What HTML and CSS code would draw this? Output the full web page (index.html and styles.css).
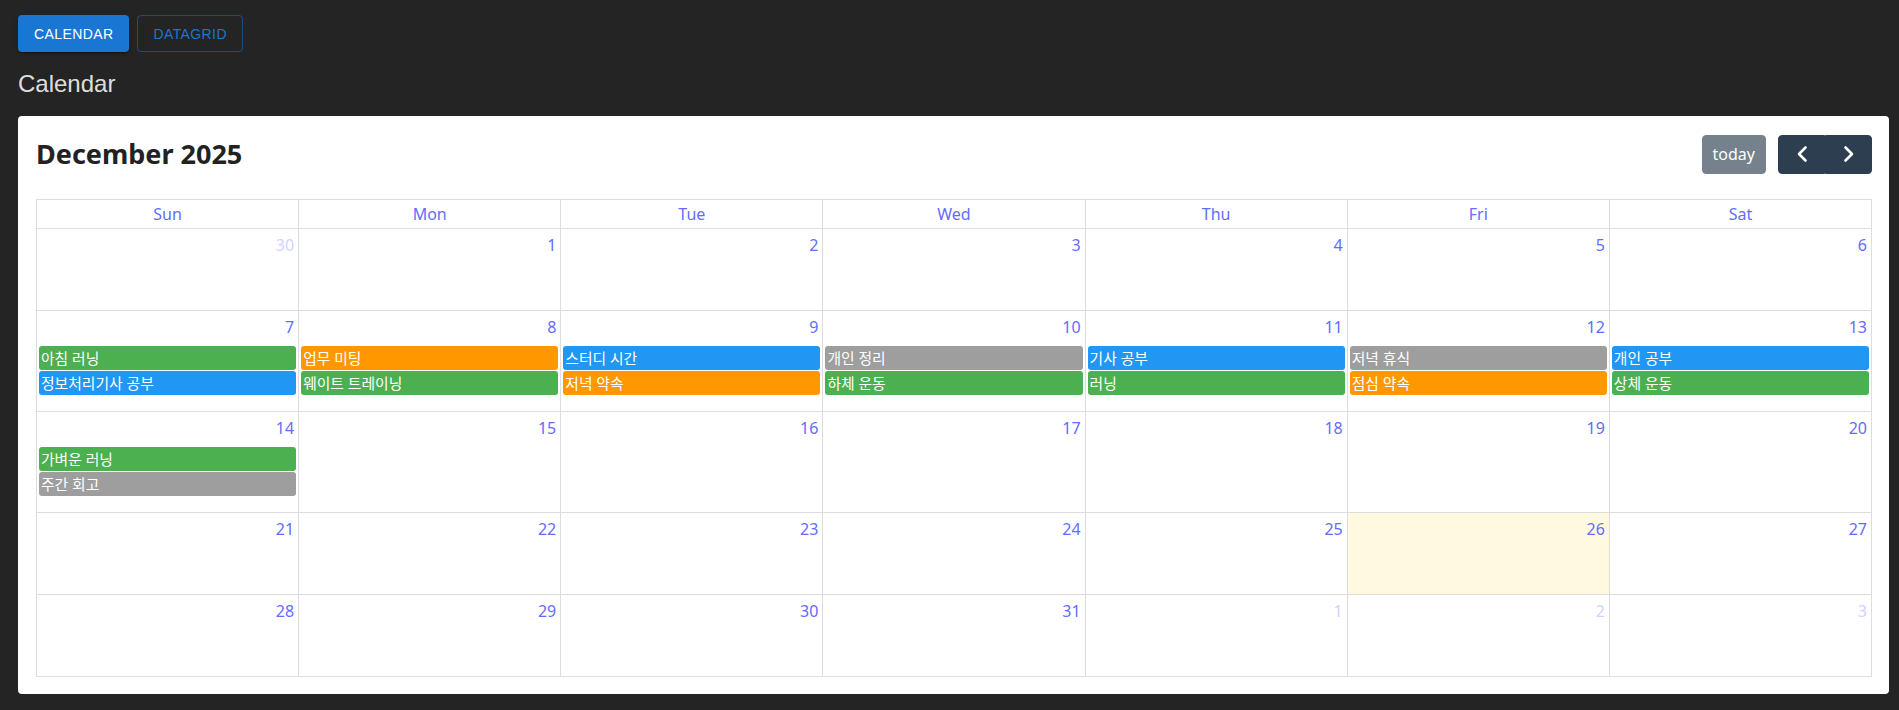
FILE: index.html
```html
<!DOCTYPE html>
<html lang="ko">
<head>
  <meta charset="UTF-8">
  <meta name="viewport" content="width=device-width, initial-scale=1.0">
  <title>Calendar</title>
  <link rel="stylesheet" href="styles.css">
</head>
<body>
  <div class="page">
    <div class="tabs">
      <button class="tab tab-active">Calendar</button>
      <button class="tab">Datagrid</button>
    </div>
    <h2 class="page-title">Calendar</h2>

    <div class="card">
      <div class="toolbar">
        <h2 class="cal-title">December 2025</h2>
        <div class="toolbar-right">
          <button class="fc-btn fc-btn-disabled">today</button>
          <div class="btn-group">
            <button class="fc-btn fc-icon-btn" aria-label="prev">
              <svg width="24" height="24" viewBox="0 0 24 24"><polyline points="15.5,5.5 9,12 15.5,18.5" fill="none" stroke="#fff" stroke-width="2.6" stroke-linecap="round" stroke-linejoin="round"/></svg>
            </button>
            <button class="fc-btn fc-icon-btn" aria-label="next">
              <svg width="24" height="24" viewBox="0 0 24 24"><polyline points="8.5,5.5 15,12 8.5,18.5" fill="none" stroke="#fff" stroke-width="2.6" stroke-linecap="round" stroke-linejoin="round"/></svg>
            </button>
          </div>
        </div>
      </div>

      <div class="month">
        <div class="dow">Sun</div>
        <div class="dow">Mon</div>
        <div class="dow">Tue</div>
        <div class="dow">Wed</div>
        <div class="dow">Thu</div>
        <div class="dow">Fri</div>
        <div class="dow">Sat</div>

        <!-- week 1 -->
        <div class="day other"><span class="num">30</span></div>
        <div class="day"><span class="num">1</span></div>
        <div class="day"><span class="num">2</span></div>
        <div class="day"><span class="num">3</span></div>
        <div class="day"><span class="num">4</span></div>
        <div class="day"><span class="num">5</span></div>
        <div class="day"><span class="num">6</span></div>

        <!-- week 2 -->
        <div class="day"><span class="num">7</span>
          <div class="events">
            <div class="event green">아침 러닝</div>
            <div class="event blue">정보처리기사 공부</div>
          </div>
        </div>
        <div class="day"><span class="num">8</span>
          <div class="events">
            <div class="event orange">업무 미팅</div>
            <div class="event green">웨이트 트레이닝</div>
          </div>
        </div>
        <div class="day"><span class="num">9</span>
          <div class="events">
            <div class="event blue">스터디 시간</div>
            <div class="event orange">저녁 약속</div>
          </div>
        </div>
        <div class="day"><span class="num">10</span>
          <div class="events">
            <div class="event gray">개인 정리</div>
            <div class="event green">하체 운동</div>
          </div>
        </div>
        <div class="day"><span class="num">11</span>
          <div class="events">
            <div class="event blue">기사 공부</div>
            <div class="event green">러닝</div>
          </div>
        </div>
        <div class="day"><span class="num">12</span>
          <div class="events">
            <div class="event gray">저녁 휴식</div>
            <div class="event orange">점심 약속</div>
          </div>
        </div>
        <div class="day"><span class="num">13</span>
          <div class="events">
            <div class="event blue">개인 공부</div>
            <div class="event green">상체 운동</div>
          </div>
        </div>

        <!-- week 3 -->
        <div class="day"><span class="num">14</span>
          <div class="events">
            <div class="event green">가벼운 러닝</div>
            <div class="event gray">주간 회고</div>
          </div>
        </div>
        <div class="day"><span class="num">15</span></div>
        <div class="day"><span class="num">16</span></div>
        <div class="day"><span class="num">17</span></div>
        <div class="day"><span class="num">18</span></div>
        <div class="day"><span class="num">19</span></div>
        <div class="day"><span class="num">20</span></div>

        <!-- week 4 -->
        <div class="day"><span class="num">21</span></div>
        <div class="day"><span class="num">22</span></div>
        <div class="day"><span class="num">23</span></div>
        <div class="day"><span class="num">24</span></div>
        <div class="day"><span class="num">25</span></div>
        <div class="day today"><span class="num">26</span></div>
        <div class="day"><span class="num">27</span></div>

        <!-- week 5 -->
        <div class="day"><span class="num">28</span></div>
        <div class="day"><span class="num">29</span></div>
        <div class="day"><span class="num">30</span></div>
        <div class="day"><span class="num">31</span></div>
        <div class="day other"><span class="num">1</span></div>
        <div class="day other"><span class="num">2</span></div>
        <div class="day other"><span class="num">3</span></div>
      </div>
    </div>
  </div>
</body>
</html>
```

FILE: styles.css
```css
* {
  box-sizing: border-box;
}

body {
  margin: 0;
  background-color: #242424;
  color: rgba(255, 255, 255, 0.87);
  font-family: "Noto Sans", "Noto Sans CJK KR", sans-serif;
  line-height: 1.5;
}

.page {
  padding: 15px 10px 16px 18px;
}

/* top tabs */
.tabs {
  display: flex;
  gap: 8px;
}

.tab {
  height: 37px;
  padding: 0 15px;
  border: 1px solid rgba(25, 118, 210, 0.5);
  border-radius: 4px;
  background: transparent;
  color: #1976d2;
  font-family: "Liberation Sans", Arial, sans-serif;
  font-size: 14px;
  font-weight: 500;
  letter-spacing: 0.02857em;
  text-transform: uppercase;
  cursor: pointer;
}

.tab-active {
  padding: 0 16px;
  border: none;
  background-color: #1976d2;
  color: #fff;
  box-shadow: 0 3px 1px -2px rgba(0, 0, 0, 0.2), 0 2px 2px 0 rgba(0, 0, 0, 0.14), 0 1px 5px 0 rgba(0, 0, 0, 0.12);
}

.page-title {
  margin: 14px 0;
  font-family: "Liberation Sans", Arial, sans-serif;
  font-size: 24px;
  font-weight: 400;
  line-height: 36px;
}

/* calendar card */
.card {
  background: #fff;
  border-radius: 4px;
  padding: 18px 17px 17px 18px;
  color: #222;
}

.toolbar {
  display: flex;
  justify-content: space-between;
  align-items: center;
  margin-bottom: 25px;
}

.cal-title {
  margin: 0;
  font-size: 27px;
  font-weight: 700;
  line-height: 40px;
  color: #222;
}

.toolbar-right {
  display: flex;
  gap: 12px;
}

.fc-btn {
  height: 39px;
  padding: 0 10px;
  border: 1px solid #2c3e50;
  border-radius: 4px;
  background-color: #2c3e50;
  color: #fff;
  font-family: inherit;
  font-size: 16px;
  line-height: 24px;
  cursor: pointer;
}

.fc-btn-disabled {
  opacity: 0.65;
  cursor: default;
}

.btn-group {
  display: flex;
}

.fc-icon-btn {
  display: flex;
  align-items: center;
  justify-content: center;
  width: 47px;
  padding: 0;
}

.btn-group .fc-icon-btn:first-child {
  border-top-right-radius: 0;
  border-bottom-right-radius: 0;
}

.btn-group .fc-icon-btn:last-child {
  border-top-left-radius: 0;
  border-bottom-left-radius: 0;
}

/* month grid */
.month {
  display: grid;
  grid-template-columns: repeat(7, 1fr);
  border-top: 1px solid #ddd;
  border-left: 1px solid #ddd;
}

.dow {
  padding: 2px 4px;
  border-right: 1px solid #ddd;
  border-bottom: 1px solid #ddd;
  text-align: center;
  color: #646cff;
  font-size: 16px;
  line-height: 24px;
}

.day {
  min-height: 82px;
  padding-bottom: 16px;
  border-right: 1px solid #ddd;
  border-bottom: 1px solid #ddd;
}

.day .num {
  display: block;
  padding: 4px;
  text-align: right;
  color: #646cff;
  font-size: 16px;
  line-height: 24px;
}

.day.other .num {
  opacity: 0.3;
}

.day.today {
  background-color: rgba(255, 220, 40, 0.15);
}

.events {
  display: flex;
  flex-direction: column;
  gap: 1px;
  margin-top: 3px;
}

.event {
  height: 24px;
  margin: 0 2px;
  padding: 0 2px;
  border-radius: 3px;
  color: #fff;
  font-size: 14.8px;
  line-height: 24px;
  white-space: nowrap;
  overflow: hidden;
}

.event.green {
  background-color: #4caf50;
}

.event.blue {
  background-color: #2196f3;
}

.event.orange {
  background-color: #ff9800;
}

.event.gray {
  background-color: #9e9e9e;
}
```
